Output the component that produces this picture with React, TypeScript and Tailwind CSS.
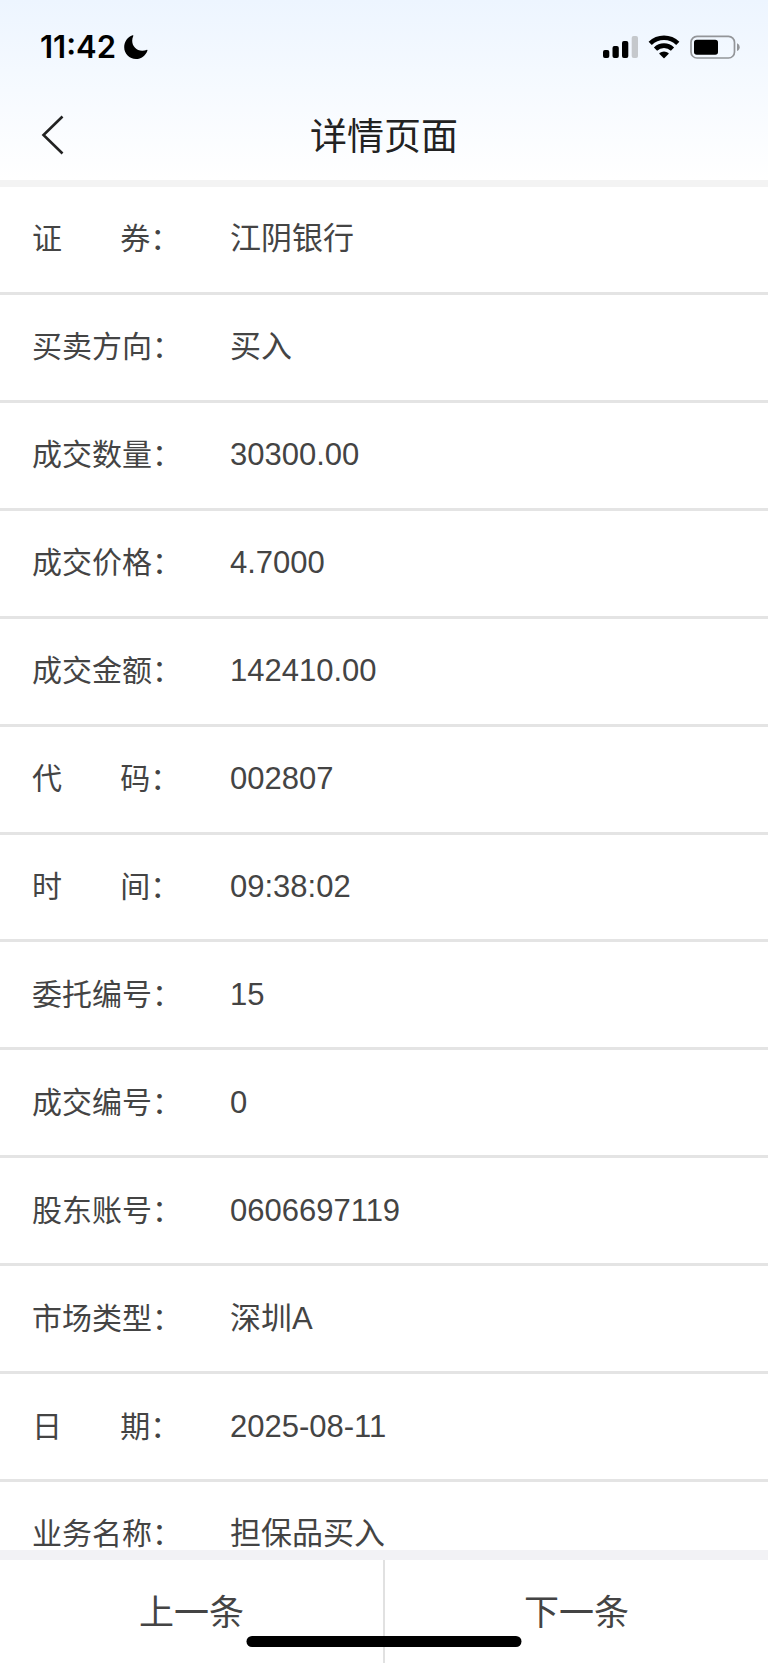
const GAP = '\u00a0'.repeat(7);

const rows: { label: string; value: string }[] = [
  { label: `证${GAP}券：`, value: '江阴银行' },
  { label: '买卖方向：', value: '买入' },
  { label: '成交数量：', value: '30300.00' },
  { label: '成交价格：', value: '4.7000' },
  { label: '成交金额：', value: '142410.00' },
  { label: `代${GAP}码：`, value: '002807' },
  { label: `时${GAP}间：`, value: '09:38:02' },
  { label: '委托编号：', value: '15' },
  { label: '成交编号：', value: '0' },
  { label: '股东账号：', value: '0606697119' },
  { label: '市场类型：', value: '深圳A' },
  { label: `日${GAP}期：`, value: '2025-08-11' },
  { label: '业务名称：', value: '担保品买入' },
];

function MoonIcon() {
  return (
    <svg width="24" height="24" viewBox="0 0 24 24" aria-hidden="true">
      <path
        d="M8.6.3c.5-.2 1 .3.7.8-.7 1.400-1.100 3-1.100 4.700 0 5.600 4.300 9.900 10 9.900 1.600 0 3.100-.3 4.300-.8.600-.2 1.100.2.900.8C21.700 20.600 17.200 24 12 24 5.400 24 .2 18.900.2 12.300.2 6.700 3.600 2 8.600.3Z"
        fill="#000"
      />
    </svg>
  );
}

function SignalIcon() {
  return (
    <svg width="35" height="24" viewBox="0 0 35 24" aria-hidden="true">
      <rect x="0" y="15" width="6.300" height="8" rx="1.900" />
      <rect x="9.500" y="11" width="6.300" height="12" rx="1.900" />
      <rect x="19" y="6" width="6.300" height="17" rx="1.900" />
      <rect x="28.700" y="1" width="6.300" height="22" rx="1.900" fill="#c5c8cc" />
    </svg>
  );
}

function WifiIcon() {
  return (
    <svg width="32" height="24" viewBox="0 0 32 24" aria-hidden="true">
      <g fill="none" stroke="#000" strokeWidth="4.600">
        <path d="M2.200 8.300a19.800 19.800 0 0 1 27.600 0" />
        <path d="M7.500 14.100a12.200 12.200 0 0 1 17 0" />
      </g>
      <path d="M11.500 18.100a6.800 6.800 0 0 1 9 0c.3.300.3.600 0 .9l-4 3.900a.7.700 0 0 1-1 0l-4-3.900c-.3-.3-.3-.6 0-.9Z" />
    </svg>
  );
}

function BatteryIcon() {
  return (
    <svg width="50" height="24" viewBox="0 0 50 24" aria-hidden="true">
      <rect x="1" y="1.300" width="43.500" height="21.700" rx="6" fill="none" stroke="#939599" strokeWidth="1.700" />
      <rect x="4" y="4.800" width="24" height="15" rx="2.800" />
      <path d="M47 8.300c1.700.7 2.700 2.100 2.700 3.900s-1 3.200-2.700 3.900Z" fill="#939599" />
    </svg>
  );
}

export default function App() {
  return (
    <div className="flex h-screen flex-col overflow-hidden bg-white font-['Liberation_Sans','Noto_Sans_CJK_SC',sans-serif] text-[#444]">
      <header className="shrink-0 border-b-[7px] border-[#f3f3f3] bg-linear-to-b from-[#edf5ff] to-white">
        <div className="flex h-[94px] items-center justify-between pr-7 pl-10 text-black">
          <div className="flex items-center gap-2">
            <span className="font-['Inter',sans-serif] text-[31px] leading-9 font-semibold">11:42</span>
            <MoonIcon />
          </div>
          <div className="flex items-center gap-[10px]">
            <SignalIcon />
            <WifiIcon />
            <BatteryIcon />
          </div>
        </div>
        <div className="grid h-[86px] grid-cols-[1fr_auto_1fr] items-center">
          <button type="button" aria-label="返回" className="flex h-full w-24 items-center pb-1 pl-10">
            <svg width="26" height="40" viewBox="0 0 26 40" fill="none" aria-hidden="true">
              <path d="M22.500 1.500 3.500 20l19 18.500" stroke="#222" strokeWidth="2.600" />
            </svg>
          </button>
          <h1 className="pt-[2px] text-[37px] leading-[48px] font-normal text-[#222]">详情页面</h1>
        </div>
      </header>

      <dl className="flex min-h-0 flex-1 flex-col overflow-y-auto leading-8">
        {rows.map((row) => (
          <div
            key={row.label}
            className="flex min-h-16 flex-1 items-center border-b-3 border-[#e4e4e4] px-8 last:h-[68px] last:flex-none last:items-end last:border-b-0"
          >
            <dt className="w-[198px] shrink-0 text-[30px] whitespace-nowrap">{row.label}</dt>
            <dd className="min-w-0 flex-1 text-[31px]">{row.value}</dd>
          </div>
        ))}
      </dl>

      <nav className="relative flex h-[113px] shrink-0 border-t-[10px] border-[#f2f2f5] bg-white text-[35px]">
        <button type="button" className="flex-1 border-r-2 border-[#e1e1e1] pt-1">
          上一条
        </button>
        <button type="button" className="flex-1 pt-1">
          下一条
        </button>
        <div className="absolute bottom-4 left-1/2 h-[11px] w-[275px] -translate-x-1/2 rounded-full bg-black" />
      </nav>
    </div>
  );
}
